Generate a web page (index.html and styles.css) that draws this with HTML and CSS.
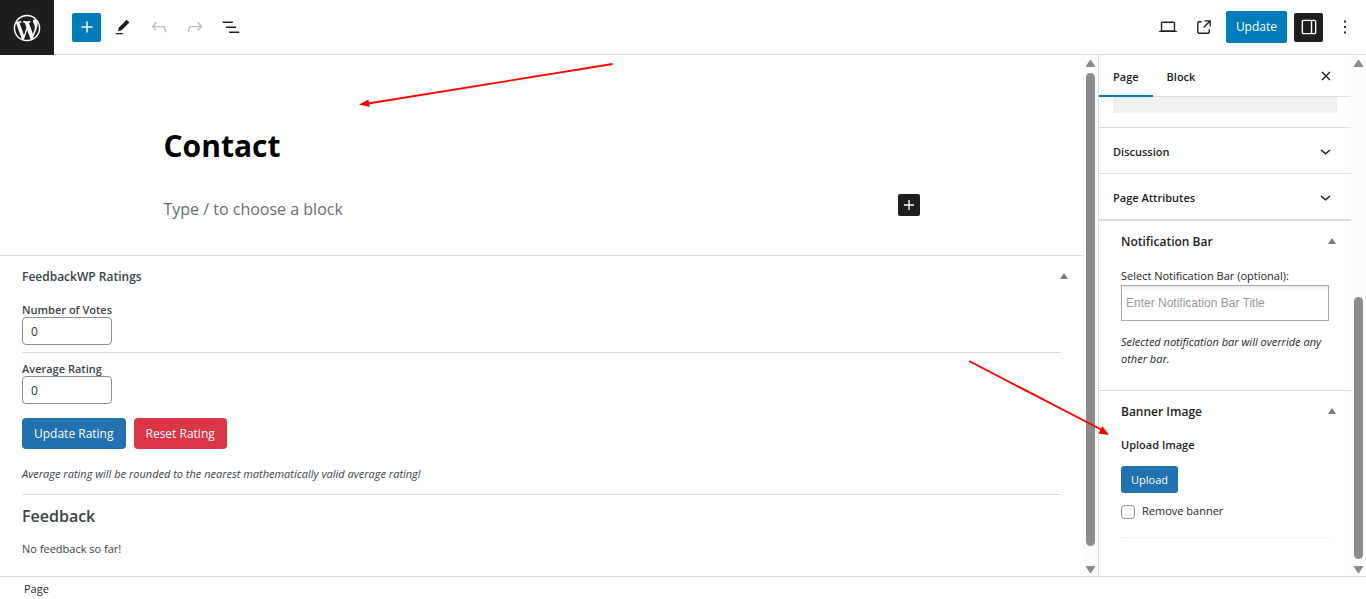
FILE: index.html
```html
<!DOCTYPE html>
<html lang="en">
<head>
<meta charset="utf-8">
<meta name="viewport" content="width=device-width, initial-scale=1">
<title>Edit Page</title>
<link rel="stylesheet" href="styles.css">
</head>
<body>
<div class="editor">
  <header class="topbar">
    <a class="logo" href="#" aria-label="View Pages">
      <svg width="32" height="32" viewBox="-2 -2 24 24" fill="#fff"><path d="M20 10c0-5.51-4.49-10-10-10C4.48 0 0 4.49 0 10c0 5.52 4.48 10 10 10 5.51 0 10-4.48 10-10zM7.78 15.37L4.37 6.22c.55-.02 1.17-.08 1.17-.08.5-.06.44-1.13-.06-1.11 0 0-1.45.11-2.37.11-.18 0-.37 0-.58-.01C4.12 2.69 6.87 1.11 10 1.11c2.33 0 4.45.87 6.05 2.34-.68-.11-1.65.39-1.65 1.58 0 .74.45 1.36.9 2.1.35.61.55 1.36.55 2.46 0 1.49-1.4 5-1.4 5l-3.03-8.37c.54-.02.82-.17.82-.17.5-.05.44-1.25-.06-1.22 0 0-1.44.12-2.38.12-.87 0-2.33-.12-2.33-.12-.5-.03-.56 1.2-.06 1.22l.92.08 1.26 3.41zM17.41 10c.24-.64.74-1.87.43-4.25.7 1.29 1.05 2.71 1.05 4.25 0 3.29-1.73 6.24-4.4 7.78.97-2.59 1.94-5.2 2.92-7.78zM6.1 18.09C3.12 16.65 1.11 13.53 1.11 10c0-1.3.23-2.48.72-3.59C3.25 10.3 4.67 14.2 6.1 18.09zm4.03-6.63l2.58 6.98c-.86.29-1.76.45-2.71.45-.79 0-1.57-.11-2.29-.33.81-2.38 1.62-4.74 2.42-7.1z"/></svg>
    </a>
    <div class="tools">
      <button class="icon-btn blue" aria-label="Toggle block inserter"><svg width="22" height="22" viewBox="0 0 24 24"><path fill="#fff" d="M18 11.2h-5.2V6h-1.6v5.2H6v1.6h5.2V18h1.6v-5.2H18z"/></svg></button>
      <button class="icon-btn" aria-label="Tools"><svg width="22" height="22" viewBox="0 0 24 24"><path fill="#1e1e1e" d="m19 7-3-3-8.500 8.500-1 4 4-1L19 7Zm-12 11.500H4V20h8v-1.500H7Z"/></svg></button>
      <button class="icon-btn" aria-label="Undo"><svg width="22" height="22" viewBox="0 0 24 24"><path fill="#bdbdbd" d="M18.300 11.700c-.6-.6-1.400-.9-2.300-.9H6.700l2.900-3.300-1.100-1-4.500 5L8.500 16l1-1-2.700-2.700H16c.5 0 .9.2 1.300.5 1 1 1 3.400 1 4.500v.3h1.500v-.2c0-1.500 0-4.300-1.500-5.700z"/></svg></button>
      <button class="icon-btn" aria-label="Redo"><svg width="22" height="22" viewBox="0 0 24 24"><path fill="#bdbdbd" d="M15.600 6.500l-1.100 1 2.900 3.300H8c-.9 0-1.700.3-2.300.9-1.400 1.500-1.400 4.200-1.400 5.600v.2h1.500v-.3c0-1.100 0-3.500 1-4.500.3-.3.700-.5 1.300-.5h9.200L14.500 15l1.100 1.100 4.600-4.600-4.600-5z"/></svg></button>
      <button class="icon-btn" aria-label="Document overview"><svg width="22" height="22" viewBox="0 0 24 24"><path fill="#1e1e1e" d="M3 6h11v1.500H3V6Zm3.500 5.500h11V13h-11v-1.500ZM21 17H10v1.500h11V17Z"/></svg></button>
    </div>
    <div class="actions">
      <button class="icon-btn" aria-label="Preview"><svg width="22" height="22" viewBox="0 0 24 24"><path fill="#1e1e1e" d="M20.500 16h-.7V8c0-1.100-.9-2-2-2H6.200c-1.100 0-2 .9-2 2v8h-.7c-.8 0-1.500.7-1.500 1.500h20c0-.8-.7-1.500-1.500-1.500zM5.700 8c0-.3.200-.5.500-.5h11.600c.3 0 .5.200.5.500v7.600H5.700V8z"/></svg></button>
      <button class="icon-btn" aria-label="View Page"><svg width="22" height="22" viewBox="0 0 24 24"><path fill="#1e1e1e" d="M19.500 4.500h-7V6h4.440l-5.970 5.970 1.060 1.060L18 7.060v4.440h1.500v-7Zm-13 1a2 2 0 0 0-2 2v10a2 2 0 0 0 2 2h10a2 2 0 0 0 2-2v-3H17v3a.5.5 0 0 1-.5.5h-10a.5.5 0 0 1-.5-.5v-10a.5.5 0 0 1 .5-.5h3V5.500h-3Z"/></svg></button>
      <button class="update">Update</button>
      <button class="icon-btn dark" aria-label="Settings"><svg width="22" height="22" viewBox="0 0 24 24"><path fill="#fff" fill-rule="evenodd" d="M18 4H6c-1.100 0-2 .9-2 2v12c0 1.100.9 2 2 2h12c1.100 0 2-.9 2-2V6c0-1.100-.9-2-2-2zm-4 14.500H6c-.3 0-.5-.2-.5-.5V6c0-.3.200-.5.5-.5h8v13zm4.500-.5c0 .3-.2.5-.5.5h-2.500v-13H18c.3 0 .5.200.5.500v12z"/></svg></button>
      <button class="icon-btn more" aria-label="Options"><svg width="22" height="22" viewBox="0 0 24 24"><path fill="#1e1e1e" d="M13 19h-2v-2h2v2zm0-6h-2v-2h2v2zm0-6h-2V5h2v2z"/></svg></button>
    </div>
  </header>

  <div class="workspace">
    <main class="content">
      <section class="canvas">
        <h1 class="title">Contact</h1>
        <div class="block-row">
          <p class="placeholder">Type / to choose a block</p>
          <button class="inserter" aria-label="Add block"><svg width="20" height="20" viewBox="0 0 24 24"><path fill="#fff" d="M18 11.200h-5.200V6h-1.600v5.200H6v1.600h5.200V18h1.600v-5.200H18z"/></svg></button>
        </div>
      </section>
      <section class="ratings">
        <div class="box-head">
          <h2>FeedbackWP Ratings</h2>
          <button class="toggle" aria-label="Toggle panel: FeedbackWP Ratings"><svg width="8" height="6" viewBox="0 0 8 6"><path fill="#787c82" d="M4 0l4 6H0z"/></svg></button>
        </div>
        <div class="field">
          <label for="votes">Number of Votes</label>
          <input id="votes" type="text" value="0">
        </div>
        <hr>
        <div class="field">
          <label for="average">Average Rating</label>
          <input id="average" type="text" value="0">
        </div>
        <div class="buttons">
          <button class="btn primary">Update Rating</button>
          <button class="btn danger">Reset Rating</button>
        </div>
        <p class="hint">Average rating will be rounded to the nearest mathematically valid average rating!</p>
        <hr>
        <h3>Feedback</h3>
        <p class="empty">No feedback so far!</p>
      </section>
    </main>
    <div class="scroll main-scroll" aria-hidden="true">
      <svg width="9" height="7" viewBox="0 0 9 7"><path fill="#8b8b8b" d="M4 0h1l4 6v1H0V6z"/></svg>
      <div class="track"><div class="thumb"></div></div>
      <svg width="9" height="7" viewBox="0 0 9 7"><path fill="#8b8b8b" d="M4 7h1l4-6V0H0v1z"/></svg>
    </div>

    <aside class="sidebar">
      <nav class="tabs">
        <button class="tab active">Page</button>
        <button class="tab">Block</button>
        <button class="close" aria-label="Close Settings"><svg width="10" height="10" viewBox="0 0 10 10"><path d="M1 1l8 8M9 1l-8 8" stroke="#1e1e1e" stroke-width="1.400" fill="none"/></svg></button>
      </nav>
      <div class="image-slot"><div class="slot-fill"></div></div>
      <button class="panel">Discussion<svg width="11" height="6" viewBox="0 0 11 6"><path d="M1 1l4.500 3.800L10 1" stroke="#1e1e1e" stroke-width="1.500" fill="none"/></svg></button>
      <button class="panel">Page Attributes<svg width="11" height="6" viewBox="0 0 11 6"><path d="M1 1l4.500 3.800L10 1" stroke="#1e1e1e" stroke-width="1.500" fill="none"/></svg></button>
      <section class="metabox notification">
        <div class="box-head">
          <h2>Notification Bar</h2>
          <button class="toggle" aria-label="Toggle panel: Notification Bar"><svg width="8" height="6" viewBox="0 0 8 6"><path fill="#787c82" d="M4 0l4 6H0z"/></svg></button>
        </div>
        <label class="select-label" for="bar">Select Notification Bar (optional):</label>
        <input id="bar" class="bar-input" type="text" placeholder="Enter Notification Bar Title">
        <p class="note">Selected notification bar will override any other bar.</p>
      </section>
      <section class="metabox">
        <div class="box-head">
          <h2>Banner Image</h2>
          <button class="toggle" aria-label="Toggle panel: Banner Image"><svg width="8" height="6" viewBox="0 0 8 6"><path fill="#787c82" d="M4 0l4 6H0z"/></svg></button>
        </div>
        <h3 class="upload-title">Upload Image</h3>
        <button class="upload">Upload</button>
        <div class="check"><input id="remove" type="checkbox"><label for="remove">Remove banner</label></div>
        <hr class="light">
      </section>
    </aside>
    <div class="scroll side-scroll" aria-hidden="true">
      <svg width="9" height="7" viewBox="0 0 9 7"><path fill="#8b8b8b" d="M4 0h1l4 6v1H0V6z"/></svg>
      <div class="track"><div class="thumb"></div></div>
      <svg width="9" height="7" viewBox="0 0 9 7"><path fill="#8b8b8b" d="M4 7h1l4-6V0H0v1z"/></svg>
    </div>
  </div>

  <footer class="footer">Page</footer>

  <svg class="arrow arrow-title" width="256" height="48" viewBox="0 0 256 48"><path d="M252.500 4L8 43.500" stroke="#f00" stroke-width="1.800"/><path fill="#f00" d="M-1 44.500l9.500-5 1.200 7.500z"/></svg>
  <svg class="arrow arrow-upload" width="144" height="78" viewBox="0 0 144 78"><path d="M1 1l134 69.500" stroke="#f00" stroke-width="1.800"/><path fill="#f00" d="M141 75l-10.500-1.500 3.800-7.500z"/></svg>
</div>
</body>
</html>
```
FILE: styles.css
```css
* { box-sizing: border-box; }

body {
  margin: 0;
  background: #fff;
  color: #1e1e1e;
  font: 11px/16px "Open Sans", "Noto Sans", sans-serif;
}

h1, h2, h3, p { margin: 0; }

button, input { font: inherit; color: inherit; }

button {
  padding: 0;
  border: 0;
  background: none;
  cursor: pointer;
}

svg { display: block; }

.editor {
  position: relative;
  display: flex;
  flex-direction: column;
  min-height: 100vh;
}

/* Top bar */
.topbar {
  display: flex;
  align-items: stretch;
  height: 55px;
  border-bottom: 1px solid #ddd;
}

.logo {
  display: flex;
  align-items: center;
  justify-content: center;
  width: 54px;
  height: 55px;
  background: #1e1e1e;
}

.tools, .actions {
  display: flex;
  align-items: center;
  gap: 7px;
}

.tools { padding-left: 18px; }

.actions { margin-left: auto; padding-right: 7px; }

.icon-btn {
  display: flex;
  align-items: center;
  justify-content: center;
  width: 29px;
  height: 29px;
  border-radius: 2px;
}

.blue { background: #007cba; }
.dark { background: #1e1e1e; }

.update {
  height: 32px;
  padding: 0 10px;
  border-radius: 2px;
  background: #007cba;
  color: #fff;
  font-size: 12px;
}

/* Workspace */
.workspace {
  display: flex;
  flex: 1;
}

.content { flex: 1; min-width: 0; }

.canvas {
  max-width: 756px;
  margin: 0 auto;
  padding: 69px 0 36px;
}

.title {
  color: #000;
  font-size: 30px;
  line-height: 44px;
  font-weight: 700;
}

.block-row {
  display: flex;
  align-items: flex-start;
  justify-content: space-between;
  margin-top: 26px;
}

.placeholder {
  padding-top: 5px;
  color: #6c6c6c;
  font-size: 16px;
  line-height: 20px;
}

.inserter {
  display: flex;
  align-items: center;
  justify-content: center;
  width: 22px;
  height: 22px;
  border-radius: 2px;
  background: #1e1e1e;
}

.ratings {
  padding: 12px 22px 19px;
  border-top: 1px solid #ddd;
  color: #3c434a;
}

.box-head {
  display: flex;
  align-items: center;
  justify-content: space-between;
  height: 18px;
}

.box-head h2 {
  font-size: 12px;
  line-height: 18px;
  font-weight: 600;
}

.toggle { padding-bottom: 2px; }

.ratings .box-head { margin-right: -7px; }

.field {
  display: flex;
  flex-direction: column;
  align-items: flex-start;
}

.box-head + .field { margin-top: 16px; }

.field label { line-height: 15px; font-weight: 600; }

.field input {
  width: 90px;
  height: 28px;
  padding: 0 8px;
  border: 1px solid #8c8f94;
  border-radius: 4px;
  background: #fff;
  color: #2c3338;
  font-size: 12px;
}

hr {
  width: 100%;
  height: 1px;
  margin: 7px 0 8px;
  border: 0;
  background: #dcdcde;
}

.buttons {
  display: flex;
  gap: 8px;
  margin-top: 14px;
}

.btn {
  height: 31px;
  padding: 0 12px;
  border-radius: 4px;
  color: #fff;
  font-size: 12px;
}

.primary, .upload { background: #2271b1; }
.danger { background: #dc3545; }

.hint { margin: 17px 0 12px; font-style: italic; }

.ratings h3 {
  margin-top: 9px;
  font-size: 16px;
  line-height: 24px;
  font-weight: 600;
}

.empty { margin-top: 13px; }

/* Scrollbars */
.scroll {
  display: flex;
  flex-direction: column;
  align-items: center;
  width: 15px;
  padding: 5px 0 3px;
  background: #fcfcfc;
}

.track {
  display: flex;
  flex: 1;
  width: 9px;
  padding: 6px 0 20px;
}

.side-scroll .track {
  padding-bottom: 7px;
  align-items: flex-end;
}

.thumb {
  width: 9px;
  border-radius: 5px;
  background: #8b8b8b;
}

.side-scroll .thumb { height: 54%; }

/* Sidebar */
.sidebar {
  width: 253px;
  border-left: 1px solid #ddd;
}

.tabs {
  display: flex;
  align-items: stretch;
  height: 42px;
  border-bottom: 1px solid #ddd;
}

.tab {
  padding: 4px 14px 0;
  border-bottom: 2px solid transparent;
  margin-bottom: -1px;
  font-weight: 600;
}

.active { border-bottom-color: #007cba; }

.close { margin-left: auto; padding: 0 20px; }

.image-slot { height: 31px; padding: 0 14px; border-bottom: 1px solid #ddd; }

.slot-fill { height: 16px; background: #f0f0f0; }

.panel {
  display: flex;
  align-items: center;
  justify-content: space-between;
  width: 100%;
  height: 46px;
  padding: 2px 20px 0 14px;
  border-bottom: 1px solid #ddd;
  font-weight: 600;
}

.metabox {
  padding: 12px 22px 0;
  border-top: 1px solid #ddd;
}

.metabox .box-head { margin-right: -7px; }

.notification { height: 170px; }

.select-label { display: block; margin-top: 16px; line-height: 18px; }

.bar-input {
  width: 100%;
  height: 36px;
  padding: 0 4px;
  border: 1px solid #aaa;
  background: linear-gradient(#eee 1%, #fff 15%);
  font: 12px/16px "Liberation Sans", Arial, sans-serif;
}

.bar-input::placeholder { color: #999; opacity: 1; }

.note { margin-top: 12px; line-height: 17px; font-style: italic; }

.upload-title {
  margin-top: 15px;
  font-size: 11px;
  line-height: 18px;
  font-weight: 600;
}

.upload {
  display: block;
  height: 27px;
  margin-top: 12px;
  padding: 0 10px;
  border-radius: 3px;
  color: #fff;
}

.check {
  display: flex;
  align-items: center;
  gap: 7px;
  margin-top: 10px;
}

.check input {
  appearance: none;
  width: 14px;
  height: 14px;
  margin: 2px 0 0;
  border: 1px solid #8c8f94;
  border-radius: 4px;
  background: #fff;
}

.light { margin: 18px 0 0; background: #f0f0f1; }

/* Footer */
.footer {
  height: 23px;
  padding: 4px 24px 0;
  border-top: 1px solid #ddd;
}

/* Annotations over the editor */
.arrow { position: absolute; overflow: visible; pointer-events: none; }
.arrow-title { left: 360px; top: 60px; }
.arrow-upload { left: 968px; top: 360px; }
```
